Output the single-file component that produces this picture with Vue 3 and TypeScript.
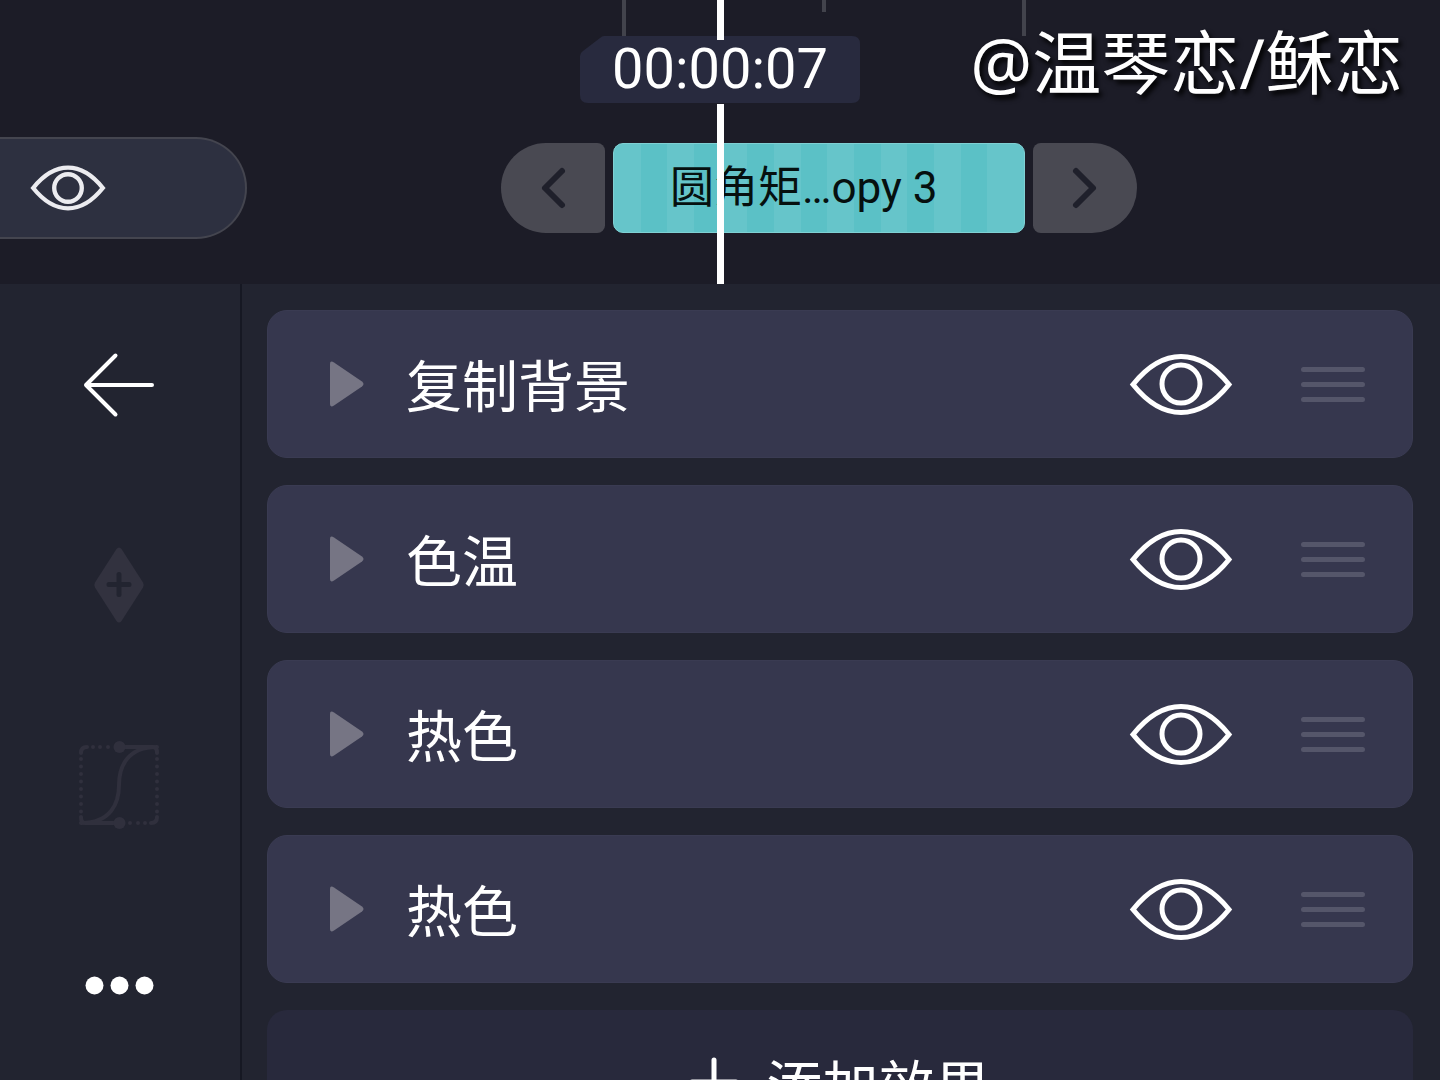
<script setup lang="ts">
import { ref } from 'vue'

interface Effect {
  id: number
  name: string
  visible: boolean
  open: boolean
}

const timecode = '00:00:07'
const clipName = '圆角矩…opy 3'
const ticks = [{ major: true }, { major: false }, { major: true }]
const curveDotsX = [16, 23, 31]
const curveDotsY = [18, 25.5, 33, 40.5, 48, 55.5, 63, 70.5]

const layerVisible = ref(true)
const effects = ref<Effect[]>([
  { id: 1, name: '复制背景', visible: true, open: false },
  { id: 2, name: '色温', visible: true, open: false },
  { id: 3, name: '热色', visible: true, open: false },
  { id: 4, name: '热色', visible: true, open: false },
])

function addEffect(): void {
  effects.value.push({ id: effects.value.length + 1, name: '热色', visible: true, open: false })
}
</script>

<template>
  <div class="editor">
    <header class="timeline">
      <div class="ruler">
        <i v-for="(tick, i) in ticks" :key="i" class="tick" :class="{ major: tick.major }"></i>
      </div>

      <div class="track">
        <div class="layer">
          <button class="plain" type="button" aria-label="图层可见性" @click="layerVisible = !layerVisible">
            <svg class="layer-eye" viewBox="0 0 102 62">
              <path d="M3 31C19 11 35 3 51 3S83 11 99 31C83 51 67 59 51 59S19 51 3 31Z" />
              <circle cx="51" cy="31" r="19" />
            </svg>
          </button>
        </div>
        <div class="clip-group">
          <button class="nudge prev" type="button" aria-label="上一个">
            <svg width="24" height="42" viewBox="0 0 24 42"><path d="M21 4L4 21L21 38" /></svg>
          </button>
          <div class="clip"><span>{{ clipName }}</span></div>
          <button class="nudge next" type="button" aria-label="下一个">
            <svg width="24" height="42" viewBox="0 0 24 42"><path d="M3 4L20 21L3 38" /></svg>
          </button>
        </div>
      </div>

      <i class="playhead upper"></i>
      <i class="playhead lower"></i>
      <div class="timecode">
        <svg viewBox="0 0 280 67" aria-hidden="true">
          <path d="M24 0H272Q280 0 280 8V59Q280 67 272 67H8Q0 67 0 59V20Q0 17 3 15L20 2Q22 0 24 0Z" />
        </svg>
        <time>{{ timecode }}</time>
      </div>
      <div class="credit">@温琴恋/稣恋</div>
    </header>

    <main class="workspace">
      <nav class="tools">
        <button class="plain tool" type="button" aria-label="返回">
          <svg width="74" height="66" viewBox="0 0 74 66">
            <path class="back" d="M33.500 3.500L4 33L33.500 62.500M4 33H70" />
          </svg>
        </button>
        <button class="plain tool" type="button" aria-label="添加关键帧">
          <svg width="50" height="78" viewBox="0 0 50 78">
            <path class="keyframe" d="M22.500 3Q25 0 27.500 3L49 36.500Q50.500 39 49 41.500L27.500 75Q25 78 22.500 75L1 41.500Q-.5 39 1 36.500Z" />
            <path class="keyframe-plus" d="M15 38.500H35M25 28.500V48.500" />
          </svg>
        </button>
        <button class="plain tool" type="button" aria-label="曲线">
          <svg class="curve" width="84" height="88" viewBox="0 0 84 88">
            <path d="M4 82C34 82 42 62 42 44S50 6 80 6" />
            <path d="M42 6H76Q80 6 80 12M42 82H8Q4 82 4 76M4 12Q4 6 10 6M80 76Q80 82 74 82" />
            <circle cx="42.500" cy="6" r="6" />
            <circle cx="42.500" cy="82" r="6" />
            <circle v-for="x in curveDotsX" :key="'t' + x" :cx="x" cy="6" r="2" />
            <circle v-for="x in curveDotsX" :key="'b' + x" :cx="84 - x" cy="82" r="2" />
            <circle v-for="y in curveDotsY" :key="'l' + y" cx="4" :cy="y" r="2" />
            <circle v-for="y in curveDotsY" :key="'r' + y" cx="80" :cy="y" r="2" />
          </svg>
        </button>
        <button class="plain tool" type="button" aria-label="更多">
          <svg width="70" height="20" viewBox="0 0 70 20">
            <circle cx="10.500" cy="10.500" r="9" /><circle cx="35.500" cy="10.500" r="9" /><circle cx="60.500" cy="10.500" r="9" />
          </svg>
        </button>
      </nav>

      <section class="effects">
        <article v-for="effect in effects" :key="effect.id" class="effect">
          <button class="plain" type="button" aria-label="展开" @click="effect.open = !effect.open">
            <svg width="34" height="46" viewBox="0 0 34 46">
              <path class="disclosure" d="M0 3Q0-1 4 1.500L32 20.500Q35 23 32 25.500L4 44.500Q0 47 0 43Z" />
            </svg>
          </button>
          <h2>{{ effect.name }}</h2>
          <button class="plain" type="button" aria-label="可见性" @click="effect.visible = !effect.visible">
            <svg class="eye" width="102" height="62" viewBox="0 0 102 62">
              <path d="M3 31.500C19 11.500 35 3.500 51 3.500S83 11.500 99 31.500C83 51.500 67 59.500 51 59.500S19 51.500 3 31.500Z" />
              <circle cx="51" cy="31" r="19" />
            </svg>
          </button>
          <button class="plain" type="button" aria-label="拖动排序">
            <svg class="handle" width="64" height="36" viewBox="0 0 64 36">
              <path d="M2.500 3.500H61.500M2.500 18.500H61.500M2.500 33.500H61.500" />
            </svg>
          </button>
        </article>
        <button class="add" type="button" @click="addEffect">
          <svg width="48" height="52" viewBox="0 0 48 52"><path d="M24 2V46M2 24H46" /></svg>
          <span>添加效果</span>
        </button>
      </section>
    </main>
  </div>
</template>

<style>
body {
  margin: 0;
  background: #222430;
}
</style>

<style scoped>
.editor {
  display: flex;
  flex-direction: column;
  height: 100vh;
  overflow: hidden;
  color: #fff;
  background: #222430;
  font-family: Roboto, "Noto Sans CJK SC", sans-serif;
}

button {
  font: inherit;
  color: inherit;
  border: 0;
  padding: 0;
  cursor: pointer;
}

svg {
  display: block;
  overflow: visible;
}

.plain {
  background: none;
}

.timeline {
  position: relative;
  flex: none;
  padding-bottom: 45px;
  background: #1c1c27;
  overflow: hidden;
}

.ruler {
  display: flex;
  gap: 196px;
  height: 36px;
  padding-left: calc(50% - 98px);
}

.tick {
  flex: none;
  width: 4px;
  height: 12px;
  background: #42434c;
}

.tick.major {
  height: 36px;
}

.track {
  display: flex;
  align-items: center;
  margin-top: 101px;
}

.layer {
  box-sizing: border-box;
  display: flex;
  align-items: center;
  flex: none;
  width: 247px;
  height: 102px;
  padding-left: 31px;
  border: 2px solid #44454f;
  border-left: 0;
  border-radius: 0 51px 51px 0;
  background: #2d3040;
}

.layer-eye,
.eye {
  fill: none;
  stroke: #fff;
  stroke-width: 5;
}

.layer-eye {
  width: 74px;
  height: 46px;
  stroke: #ececf0;
  stroke-width: 6;
}

.clip-group {
  display: flex;
  gap: 8px;
  margin-left: calc(50% - 466px);
}

.nudge {
  display: flex;
  align-items: center;
  justify-content: center;
  width: 104px;
  height: 90px;
  background: #494952;
}

.nudge path {
  fill: none;
  stroke: #1f202b;
  stroke-width: 6;
  stroke-linecap: round;
  stroke-linejoin: round;
}

.prev {
  border-radius: 46px 8px 8px 46px;
}

.next {
  border-radius: 8px 46px 46px 8px;
}

.clip {
  box-sizing: border-box;
  width: 412px;
  height: 90px;
  padding-left: 56px;
  border: 1px solid #7fd0d3;
  border-radius: 10px;
  color: #06100f;
  font-size: 44px;
  line-height: 88px;
  white-space: nowrap;
  background: #66c5ca repeating-linear-gradient(
    90deg,
    #66c5ca 0 calc(80px / 3),
    #5bc1c6 calc(80px / 3) calc(160px / 3)
  ) 0 0 / 400px 100% no-repeat;
}

.playhead {
  position: absolute;
  left: calc(50% - 3px);
  width: 7px;
  background: #fff;
}

.playhead.upper {
  z-index: 2;
  top: 0;
  height: 40px;
}

.playhead.lower {
  top: 104px;
  bottom: 0;
}

.timecode {
  position: absolute;
  z-index: 1;
  top: 36px;
  left: calc(50% - 140px);
  width: 280px;
  height: 67px;
  font-size: 56px;
  line-height: 67px;
  text-align: center;
}

.timecode svg {
  position: absolute;
  inset: 0;
  fill: #282a3e;
}

.timecode time {
  position: relative;
}

.credit {
  position: absolute;
  top: 12px;
  right: 37px;
  font-family: "Noto Sans", "Noto Sans CJK SC", sans-serif;
  font-size: 69px;
  line-height: 100px;
  white-space: nowrap;
  text-shadow: 3px 4px 5px #000;
}

.workspace {
  display: flex;
  flex: 1;
  min-height: 0;
}

.tools {
  display: flex;
  flex-direction: column;
  flex: none;
  width: 240px;
  border-right: 2px solid #161823;
}

.tool {
  display: flex;
  align-items: center;
  justify-content: center;
  flex: none;
  height: 200px;
  padding: 2px 2px 0 0;
  fill: #fff;
}

.back {
  fill: none;
  stroke: #fff;
  stroke-width: 4;
  stroke-linecap: round;
  stroke-linejoin: round;
}

.keyframe {
  fill: #32323f;
}

.keyframe-plus {
  stroke: #222430;
  stroke-width: 5;
  stroke-linecap: round;
}

.curve path {
  fill: none;
  stroke: #30303d;
  stroke-width: 4;
  stroke-linecap: round;
}

.curve circle {
  fill: #30303d;
}

.effects {
  display: flex;
  flex-direction: column;
  flex: 1;
  gap: 27px;
  padding: 26px 27px 26px 25px;
  overflow-y: auto;
  scrollbar-width: none;
}

.effect,
.add {
  box-sizing: border-box;
  display: flex;
  align-items: center;
  flex: none;
  height: 148px;
  border-radius: 20px;
}

.effect {
  padding: 0 47px 0 62px;
  border: 1px solid #3a3b52;
  background: #36374e;
}

.disclosure {
  fill: #767584;
}

h2,
.add span {
  padding-top: 8px;
  font-size: 56px;
  font-weight: 400;
  line-height: 80px;
}

h2 {
  flex: 1;
  margin: 0 0 0 42px;
}

.handle {
  margin-left: 69px;
  fill: none;
  stroke: #55566a;
  stroke-width: 5;
  stroke-linecap: round;
}

.add {
  justify-content: center;
  gap: 29px;
  background: #28293c;
}

.add path {
  stroke: #fff;
  stroke-width: 5;
  stroke-linecap: round;
}
</style>
